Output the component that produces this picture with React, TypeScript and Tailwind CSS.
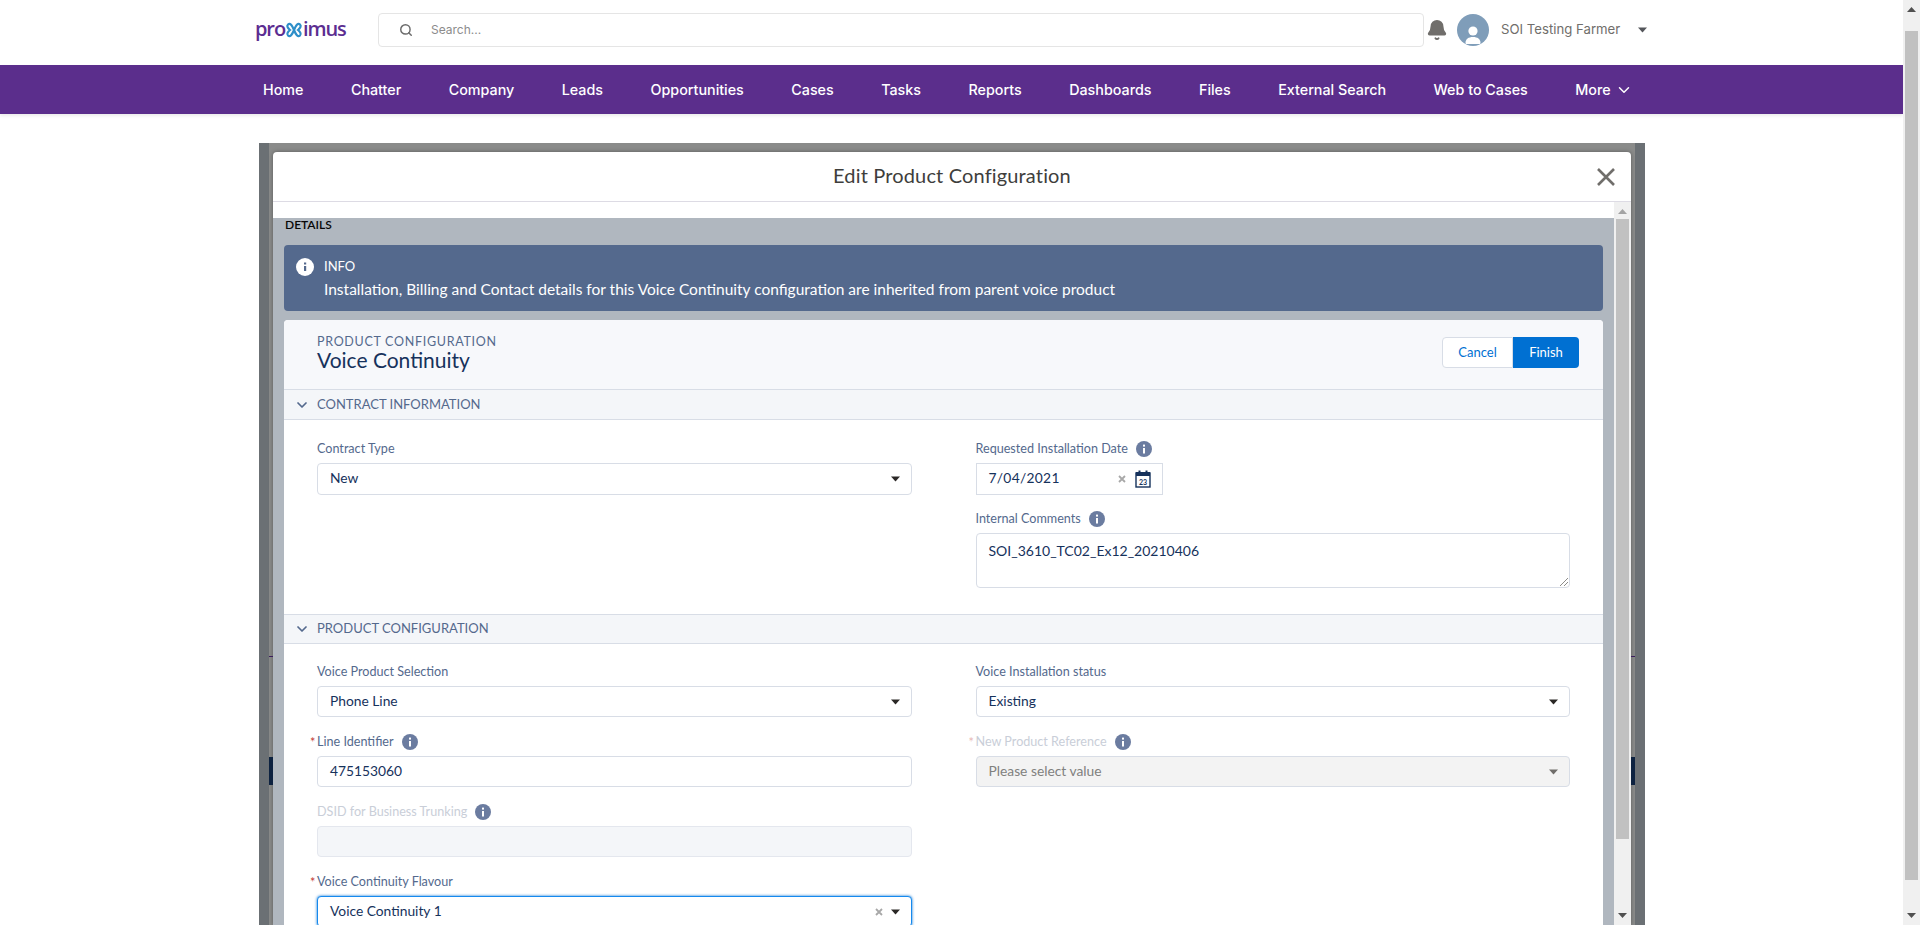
import { Bell, ChevronDown, Search } from "lucide-react";
import type { ReactNode } from "react";

const navItems = ["Home", "Chatter", "Company", "Leads", "Opportunities", "Cases", "Tasks", "Reports", "Dashboards", "Files", "External Search", "Web to Cases"];

function Caret({ className = "fill-[#3e3e3c]" }: { className?: string }) {
  return (
    <svg width="9" height="6" viewBox="0 0 9 6" className={className}>
      <path d="M0 .5h9L4.5 5.5z" />
    </svg>
  );
}

function InfoDot() {
  return (
    <svg width="16" height="16" viewBox="0 0 16 16" className="ml-[8px] shrink-0">
      <circle cx="8" cy="8" r="8" fill="#6b7ca0" />
      <rect x="7" y="7" width="2" height="5.5" fill="#fff" />
      <rect x="7" y="3.6" width="2" height="2" fill="#fff" />
    </svg>
  );
}

function ClearIcon() {
  return (
    <svg width="8" height="8" viewBox="0 0 8 8" stroke="#a8a8a8" strokeWidth="1.8">
      <path d="M1 1l6 6M7 1L1 7" />
    </svg>
  );
}

function CalendarIcon() {
  return (
    <svg width="16" height="18" viewBox="0 0 16 18">
      <rect x="1" y="3" width="14" height="14" fill="#fff" stroke="#16325c" strokeWidth="1.4" />
      <rect x="1" y="2" width="14" height="4" fill="#16325c" />
      <rect x="3.5" y="0.5" width="2" height="3.5" fill="#16325c" />
      <rect x="10.5" y="0.5" width="2" height="3.5" fill="#16325c" />
      <text x="8" y="14.5" textAnchor="middle" fontSize="7" fontWeight="700" fill="#16325c" fontFamily="Lato, sans-serif">23</text>
    </svg>
  );
}

function Field({ label, required, info, muted, children, className = "" }: { label: string; required?: boolean; info?: boolean; muted?: boolean; children: ReactNode; className?: string }) {
  return (
    <div className={className}>
      <div className="relative mb-[5px] flex h-[18px] items-center text-[12.6px]">
        {required && <span className={`absolute left-[-7px] top-px ${muted ? "text-[#e8b8b4]" : "text-[#c23934]"}`}>*</span>}
        <span className={muted ? "text-[#c9ced8]" : "text-[#54698d]"}>{label}</span>
        {info && <InfoDot />}
      </div>
      {children}
    </div>
  );
}

function Box({ value, h = "h-[31px]", clearable, disabled, focused, placeholder }: { value?: string; h?: string; clearable?: boolean; disabled?: boolean; focused?: boolean; placeholder?: boolean }) {
  return (
    <div className={`flex ${h} items-center rounded-[4px] border pl-[12px] pr-[11px] text-[13.8px] ${focused ? "border-[#1589ee] shadow-[0_0_3px_#0070d2]" : "border-[#d8dde6]"} ${disabled ? "bg-[#f3f3f3] text-[#706e6b]" : "bg-white text-[#16325c]"}`}>
      <span className={`flex-1 pb-[1px] ${placeholder ? "text-[#80807e]" : ""}`}>{value}</span>
      {clearable && <span className="mr-[8px] flex"><ClearIcon /></span>}
      <Caret className={disabled ? "fill-[#706e6b]" : "fill-[#2b2826]"} />
    </div>
  );
}

function SectionHeader({ title, h }: { title: string; h: string }) {
  return (
    <div className={`flex ${h} items-center border-y border-[#d8dde6] bg-[#f4f6f9] pl-[10px] text-[13px] text-[#54698d]`}>
      <ChevronDown className="mr-[7px] h-[16px] w-[16px] text-[#54698d]" strokeWidth={2.6} />
      {title}
    </div>
  );
}

function ScrollBar({ track, thumb, arrowTop, arrowBottom }: { track: string; thumb: string; arrowTop: string; arrowBottom: string }) {
  return (
    <div className={`flex h-full w-[17px] shrink-0 flex-col items-center ${track}`}>
      <svg width="9" height="5" viewBox="0 0 9 5" className={`mt-[7px] ${arrowTop}`}>
        <path d="M4.5 0L9 5H0z" />
      </svg>
      <div className={`w-[13px] ${thumb}`} />
      <div className="flex-1" />
      <svg width="9" height="5" viewBox="0 0 9 5" className={`mb-[7px] ${arrowBottom}`}>
        <path d="M0 0h9L4.5 5z" />
      </svg>
    </div>
  );
}

function Logo() {
  return (
    <div className="-ml-px flex h-[24px] w-[91px] items-center font-['Open_Sans',sans-serif] text-[20px] font-semibold leading-none tracking-[-1.1px] text-[#5c2d91]">
      <span className="mb-[1px]">pro</span>
      <svg width="20" height="18" viewBox="0 0 20 18" fill="none" stroke="#2e8fc9" strokeWidth="2.2" className="mx-[-1px] shrink-0">
        <path d="M4 3.5c2.4-2.2 4.4 1.5 6 5.5s3.600 7.700 6 5.500c1.800-1.800-.2-4-2-5.500 1.800-1.500 3.800-3.700 2-5.500-2.400-2.200-4.400 1.500-6 5.500s-3.600 7.700-6 5.500c-1.800-1.800.2-4 2-5.500-1.800-1.500-3.800-3.700-2-5.500z" />
      </svg>
      <span className="mb-[1px]">imus</span>
    </div>
  );
}

export default function App() {
  return (
    <div className="flex h-screen overflow-hidden bg-white">
      <div className="min-w-0 flex-1">
        {/* Top bar */}
        <header className="flex h-[65px] items-center pb-[6px] pl-[256px] font-['Inter',sans-serif]">
          <Logo />
          <div className="ml-[32px] flex h-[34px] w-[1046px] items-center rounded-[4px] border border-[#e5e5e5] bg-white pl-[20px] text-[12px] text-[#8c8c8c]">
            <Search className="mr-[18px] h-[14px] w-[14px] text-[#6b6b6b]" strokeWidth={2.5} />
            Search...
          </div>
          <Bell className="ml-[2px] h-[22px] w-[22px] fill-[#706e6b] text-[#706e6b]" />
          <div className="ml-[9px] flex h-[32px] w-[32px] items-end justify-center overflow-hidden rounded-full bg-[#7f9db9]">
            <svg width="20" height="22" viewBox="0 0 20 22" fill="#fff">
              <circle cx="10" cy="7" r="4.6" />
              <path d="M2.5 19c0-4 3-6 7.500-6s7.500 2 7.500 6c0 .8-.5 1-1 1h-13c-.5 0-1-.2-1-1z" />
            </svg>
          </div>
          <span className="ml-[12px] text-[13.2px] text-[#706e6b]">SOI Testing Farmer</span>
          <Caret className="ml-[18px] fill-[#54565b]" />
        </header>

        {/* Main navigation */}
        <nav className="flex h-[49px] items-center gap-[47.5px] bg-[#5b2e8c] pl-[263px] font-['Inter',sans-serif] text-[14.3px] font-medium text-white shadow-[0_2px_3px_rgba(0,0,0,0.08)]">
          {navItems.map((item) => (
            <span key={item} className="whitespace-nowrap">{item}</span>
          ))}
          <span className="flex items-center gap-[4px] whitespace-nowrap">
            More <ChevronDown className="h-[18px] w-[18px]" strokeWidth={2} />
          </span>
        </nav>

        {/* Dimmed workspace with the dialog */}
        <main className="pl-[259px] pt-[29px] font-['Lato',sans-serif]">
          <div className="flex h-[782px] w-[1386px] bg-[#6b7074]">
            <div className="w-[10px] shrink-0" />
            <div className="relative flex w-[1366px] flex-col bg-[#8a8b8a] px-[4px] pt-[9px]">
              <div className="absolute left-0 top-[513px] h-px w-[4px] bg-[#3c1e5e]" />
              <div className="absolute right-0 top-[513px] h-px w-[4px] bg-[#3c1e5e]" />
              <div className="absolute left-0 top-[614px] h-[28px] w-[4px] bg-[#0d2240]" />
              <div className="absolute right-0 top-[614px] h-[28px] w-[4px] bg-[#0d2240]" />

              <section className="flex min-h-0 flex-1 flex-col rounded-t-[4px] bg-white shadow-[0_0_4px_rgba(0,0,0,0.35)]">
                <div className="relative flex h-[50px] shrink-0 items-center justify-center border-b border-[#dddbe4] pb-[3px]">
                  <h2 className="text-[20px] tracking-[0.15px] text-[#3e3e3c]">Edit Product Configuration</h2>
                  <svg width="20" height="20" viewBox="0 0 20 20" className="absolute right-[15px] top-[15px]" stroke="#706e6b" strokeWidth="2.6">
                    <path d="M2 2l16 16M18 2L2 18" />
                  </svg>
                </div>

                <div className="flex min-h-0 flex-1">
                  <div className="min-w-0 flex-1 bg-white pt-[16px]">
                    <div className="h-full overflow-hidden bg-[#b0b7bf] px-[11px]">
                      <div className="flex h-[27px] items-start pl-[1px] text-[12px] font-semibold leading-[14px] text-[#080707]">DETAILS</div>

                      <div className="flex h-[66px] rounded-[4px] bg-[#54698d] pl-[12px] pt-[13px] text-white">
                        <svg width="18" height="18" viewBox="0 0 18 18" className="mr-[10px] shrink-0">
                          <circle cx="9" cy="9" r="9" fill="#fff" />
                          <rect x="8" y="8" width="2.2" height="5" fill="#54698d" />
                          <rect x="8" y="4.500" width="2.2" height="2" fill="#54698d" />
                        </svg>
                        <div>
                          <div className="text-[13px] leading-[16px]">INFO</div>
                          <div className="mt-[7px] text-[15.5px] leading-[17px]">Installation, Billing and Contact details for this Voice Continuity configuration are inherited from parent voice product</div>
                        </div>
                      </div>

                      <div className="mt-[9px] rounded-t-[4px] bg-white">
                        <div className="flex h-[69px] items-start justify-between rounded-t-[4px] bg-[#f7f8fb] pl-[33px] pr-[24px] pt-[15px]">
                          <div>
                            <div className="text-[12.5px] leading-[14px] tracking-[0.7px] text-[#54698d]">PRODUCT CONFIGURATION</div>
                            <div className="mt-[-1px] text-[21px] leading-[24px] text-[#16325c]">Voice Continuity</div>
                          </div>
                          <div className="mt-[2px] flex h-[31px] text-[13px]">
                            <span className="flex w-[71px] items-center justify-center rounded-l-[4px] border border-[#d8dde6] bg-white text-[#0070d2]">Cancel</span>
                            <span className="flex w-[66px] items-center justify-center rounded-r-[4px] bg-[#0070d2] text-white">Finish</span>
                          </div>
                        </div>

                        <SectionHeader title="CONTRACT INFORMATION" h="h-[31px]" />
                        <div className="grid grid-cols-2 gap-x-[64px] pb-[26px] pl-[33px] pr-[33px] pt-[20px]">
                          <Field label="Contract Type">
                            <Box value="New" h="h-[32px]" />
                          </Field>
                          <div>
                            <Field label="Requested Installation Date" info>
                              <div className="flex h-[32px] w-[187px] items-center border border-[#d8dde6] bg-white pl-[12px] pr-[11px] text-[13.8px] text-[#16325c]">
                                <span className="flex-1 pb-[1px] tracking-[0.3px]">7/04/2021</span>
                                <span className="mr-[9px] flex"><ClearIcon /></span>
                                <CalendarIcon />
                              </div>
                            </Field>
                            <Field label="Internal Comments" info className="mt-[15px]">
                              <div className="relative h-[55px] rounded-[4px] border border-[#d8dde6] bg-white pl-[12px] pt-[6px] text-[14px] text-[#16325c]">
                                SOI_3610_TC02_Ex12_20210406
                                <svg width="8" height="8" viewBox="0 0 8 8" className="absolute bottom-[1px] right-[1px]" stroke="#706e6b" strokeWidth="0.8">
                                  <path d="M0 8l8-8M4 8l4-4" />
                                </svg>
                              </div>
                            </Field>
                          </div>
                        </div>

                        <SectionHeader title="PRODUCT CONFIGURATION" h="h-[30px]" />
                        <div className="grid grid-cols-2 gap-x-[64px] pl-[33px] pr-[33px] pt-[19px]">
                          <div className="flex flex-col gap-[16px]">
                            <Field label="Voice Product Selection">
                              <Box value="Phone Line" />
                            </Field>
                            <Field label="Line Identifier" required info>
                              <div className="flex h-[31px] items-center rounded-[4px] border border-[#d8dde6] pb-[1px] pl-[12px] text-[13.8px] text-[#16325c]">475153060</div>
                            </Field>
                            <Field label="DSID for Business Trunking" info muted>
                              <div className="h-[31px] rounded-[4px] border border-[#e4e7ee] bg-[#f4f6f9]" />
                            </Field>
                            <Field label="Voice Continuity Flavour" required>
                              <Box value="Voice Continuity 1" clearable focused />
                            </Field>
                          </div>
                          <div className="flex flex-col gap-[16px]">
                            <Field label="Voice Installation status">
                              <Box value="Existing" />
                            </Field>
                            <Field label="New Product Reference" required info muted>
                              <Box value="Please select value" disabled placeholder />
                            </Field>
                          </div>
                        </div>
                      </div>
                    </div>
                  </div>
                  <ScrollBar track="bg-[#f0f0f0]" thumb="mt-[5px] h-[620px] bg-[#c1c1c1]" arrowTop="fill-[#a3a3a3]" arrowBottom="fill-[#505050]" />
                </div>
              </section>
            </div>
            <div className="w-[10px] shrink-0" />
          </div>
        </main>
      </div>

      {/* Page scrollbar */}
      <ScrollBar track="bg-[#f0f0f0]" thumb="mt-[19px] h-[849px] bg-[#c1c1c1]" arrowTop="fill-[#505050]" arrowBottom="fill-[#505050]" />
    </div>
  );
}
